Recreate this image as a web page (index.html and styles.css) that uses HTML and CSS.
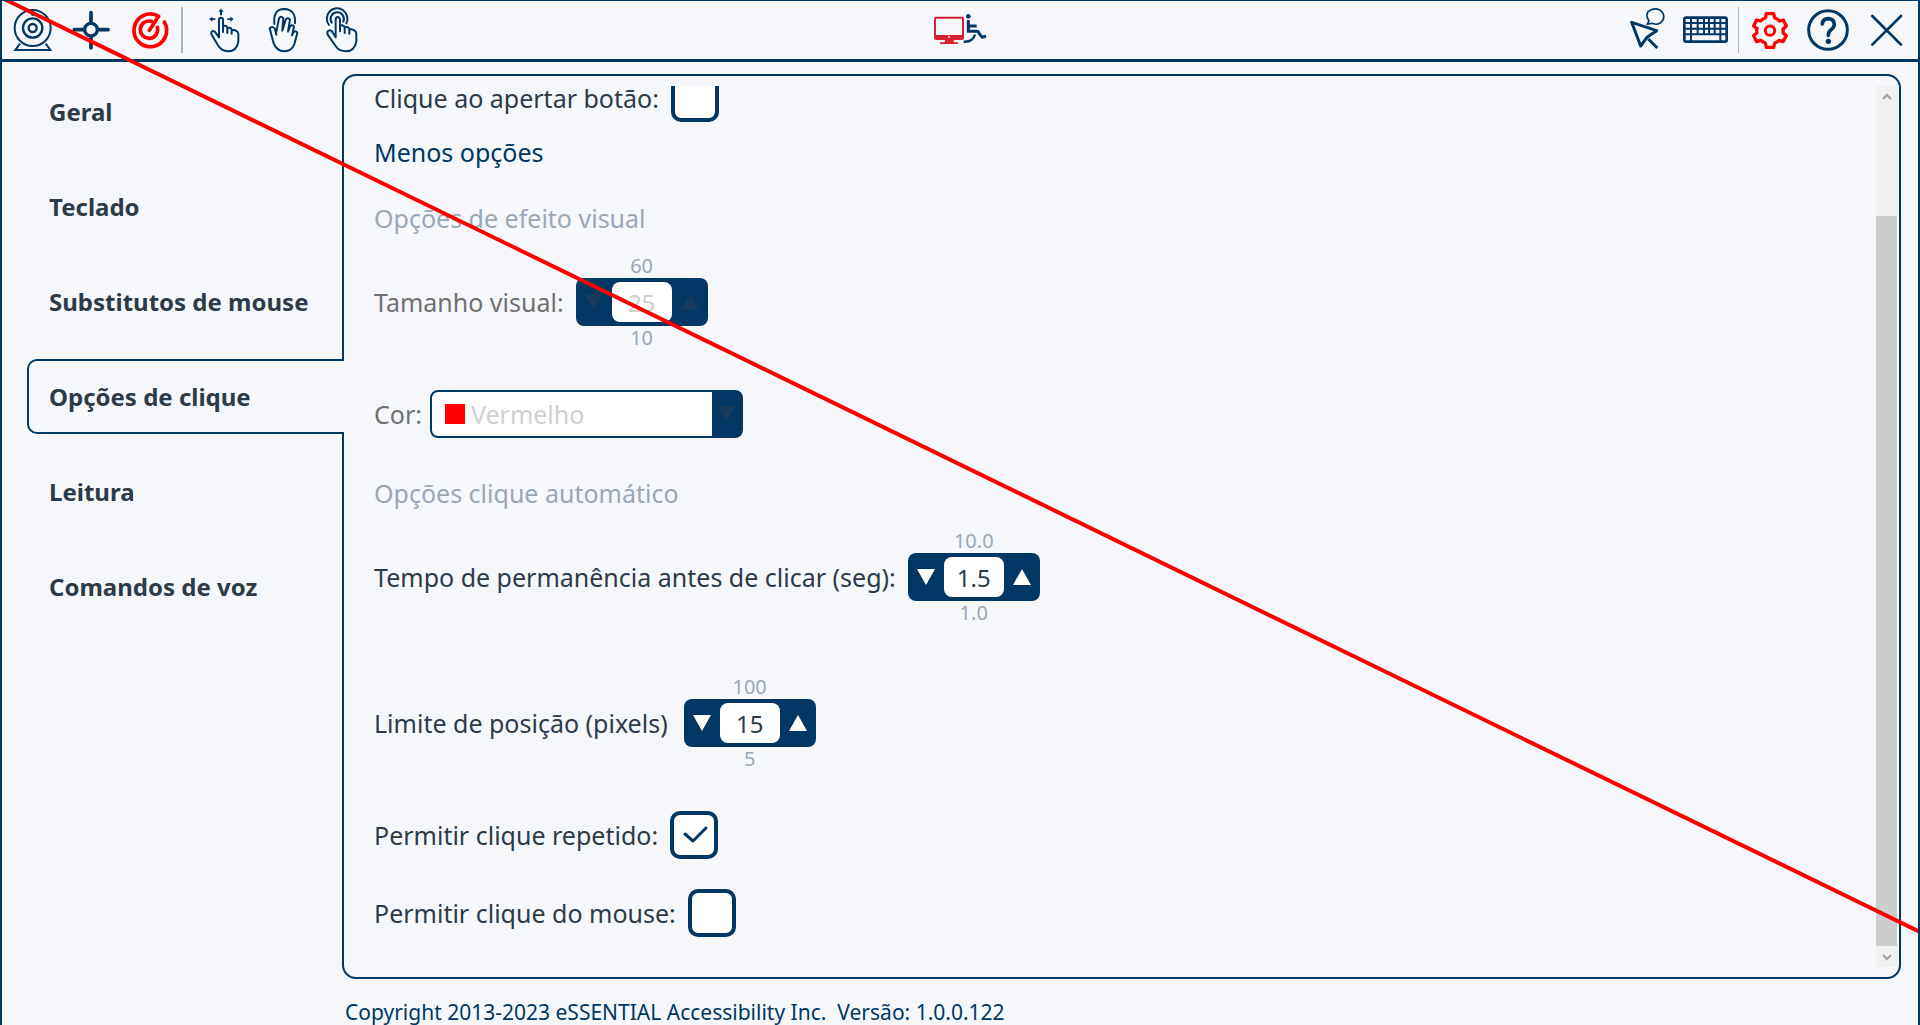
FILE: index.html
```html
<!DOCTYPE html>
<html lang="pt-BR">
<head>
<meta charset="utf-8">
<title>Configurações</title>
<link rel="stylesheet" href="styles.css">
</head>
<body>
<header class="toolbar">
  <div class="tools">
    <button class="tool" type="button" aria-label="Webcam"><svg viewBox="12 3 174 174"><g fill="none" stroke="currentColor" stroke-width="6"><circle cx="98" cy="84" r="54"/><circle cx="98" cy="84" r="29" stroke-width="7"/><circle cx="98" cy="84" r="12" stroke-width="7"/><path d="M60 131 46 150H151L137 131"/></g><circle cx="98" cy="43" r="5" fill="currentColor"/></svg></button>
    <button class="tool" type="button" aria-label="Centralizar"><svg viewBox="186 3 174 174"><g fill="none" stroke="currentColor" stroke-width="11" stroke-linecap="round"><circle cx="273" cy="89" r="19" stroke-width="10"/><path d="M273 38V66M273 113V144M223 89H250M297 89H324"/></g></svg></button>
    <button class="tool red" type="button" aria-label="Clique automático"><svg viewBox="360 3 174 174"><path fill="none" stroke="currentColor" stroke-width="11" stroke-linecap="round" stroke-linejoin="round" d="M493 66A49 49 0 1 1 476 49L448 91M472 82A26 26 0 1 1 454 64"/></svg></button>
    <span class="divider"></span>
    <button class="tool" type="button" aria-label="Arrastar"><svg viewBox="585 3 174 174"><path fill="none" stroke="currentColor" stroke-width="6" stroke-linejoin="round" stroke-linecap="round" d="M657 112V60q0-7 6-7t6 7V96M669 82q0-5 6-5t7 7V99M682 88q0-5 6-5t7 7V101M695 94q1-5 7-4l8 3q5 3 5 10V124Q711 154 684 154 663 153 654 136L635 104q-4-9 4-11 6 0 10 8l8 11"/><path fill="currentColor" d="M663 26l8 9h-5v11h-6V35h-5zM627 57l10-7v5h9v5h-9v5zM701 57l-10-7v5h-9v5h9v5z"/></svg></button>
    <button class="tool" type="button" aria-label="Clique duplo"><svg viewBox="759 3 174 174"><path fill="none" stroke="currentColor" stroke-width="6" stroke-linejoin="round" stroke-linecap="round" d="M823 72Q819 27 853 27 888 28 885 70M829 104 824 85q-8-8-15 0l11 42Q829 153 853 154 876 153 883 132L892 99q-3-8-11-3l-5 10 6-26q-5-8-12-1l-6 16 6-36q-7-9-13 0l-10 33 3-37q-7-9-13 0l-7 36-2 10"/></svg></button>
    <button class="tool" type="button" aria-label="Clique simples"><svg viewBox="933 3 174 174"><path fill="none" stroke="currentColor" stroke-width="6" stroke-linejoin="round" stroke-linecap="round" d="M987 75A31 31 0 1 1 1039 70M995 68A20 20 0 1 1 1030 65M1007 112V59q0-8 6-8t7 8V94M1020 80q1-5 7-4t7 7V99M1034 85q1-5 7-4t7 7V101M1048 91q2-5 8-3l8 4q5 3 5 12V124Q1064 154 1038 154 1016 153 1007 138L983 104q-4-10 5-13 7 0 11 8l8 13"/></svg></button>
  </div>
  <svg class="logo" viewBox="93 3 174 174" role="img" aria-label="eSSENTIAL Accessibility"><rect x="105" y="53" width="84" height="64" rx="3" fill="none" stroke="#d91f32" stroke-width="6"/><path fill="#d91f32" d="M105 105H189V117H105zM136 119h24l2 8h12v5H120v-5h14z"/><circle cx="147" cy="111" r="3" fill="#fff"/><circle cx="205" cy="49" r="7" fill="currentColor"/><path fill="none" stroke="currentColor" stroke-width="9" d="M205 60V94H230Q235 94 238 101L247 112 258 108M205 78H230"/><path fill="none" stroke="currentColor" stroke-width="7" d="M225 104Q218 127 191 125"/></svg>
  <div class="tools end">
    <button class="tool" type="button" aria-label="Cursor"><svg viewBox="54 3 174 174"><path fill="none" stroke="currentColor" stroke-width="9" stroke-linejoin="round" d="M95 67 122 138 141 112 170 92zM145 117 172 144"/><path fill="none" stroke="currentColor" stroke-width="5" d="M147 63Q132 39 152 30 174 21 188 38 197 57 181 69 170 76 157 70L142 72z"/></svg></button>
    <button class="tool" type="button" aria-label="Teclado"><svg viewBox="228 3 174 174"><path fill="none" stroke="currentColor" stroke-width="6" d="M253 69H380M253 86H380M253 103H380M273 55V124M293 55V103M312 55V103M327 55V103M344 55V103M361 55V124"/><rect x="253" y="53" width="127" height="72" rx="5" fill="none" stroke="currentColor" stroke-width="8"/></svg></button>
    <span class="divider thin"></span>
    <button class="tool red" type="button" aria-label="Configurações"><svg viewBox="423 3 174 174"><g fill="none" stroke="currentColor" stroke-width="10" stroke-linejoin="round"><path d="M499 41H521L524 54Q533 57 539 63L550 60 559 78 549 87Q550 93 549 98L559 107 549 125 537 121Q531 127 524 129L521 142H499L496 129Q488 126 482 121L470 125 461 107 471 98Q469 92 471 86L461 78 470 60 482 63Q488 56 496 54z"/><circle cx="510" cy="92" r="14" stroke-width="9"/></g></svg></button>
    <button class="tool" type="button" aria-label="Ajuda"><svg viewBox="597 3 174 174"><circle cx="684" cy="90" r="58" fill="none" stroke="currentColor" stroke-width="9"/><path fill="none" stroke="currentColor" stroke-width="11" stroke-linecap="round" d="M667 72Q668 56 685 56 703 57 703 74 702 83 693 89 685 95 685 106"/><circle cx="685" cy="124" r="8" fill="currentColor"/></svg></button>
    <button class="tool" type="button" aria-label="Fechar"><svg viewBox="771 3 174 174"><path fill="none" stroke="currentColor" stroke-width="8" stroke-linecap="round" d="M817 48 903 134M903 48 817 134"/></svg></button>
  </div>
</header>

<main class="main">
  <nav class="tabs">
    <a class="tab" href="#geral">Geral</a>
    <a class="tab" href="#teclado">Teclado</a>
    <a class="tab" href="#mouse">Substitutos de mouse</a>
    <a class="tab active" href="#clique" aria-current="page">Opções de clique</a>
    <a class="tab" href="#leitura">Leitura</a>
    <a class="tab" href="#voz">Comandos de voz</a>
  </nav>
  <section class="panel">
    <form class="options">
      <div class="row first"><label for="press">Clique ao apertar botão:</label><input class="check" type="checkbox" id="press"></div>
      <a class="less" href="#menos">Menos opções</a>
      <h2 class="heading">Opções de efeito visual</h2>
      <div class="row disabled"><label for="size">Tamanho visual:</label>
        <div class="range"><span class="limit">60</span>
          <div class="spinner"><button class="step" type="button" disabled aria-label="Diminuir"><svg viewBox="0 0 18 16"><path d="M0 0H18L9 16z"/></svg></button><input class="value" id="size" type="text" value="25" disabled><button class="step" type="button" disabled aria-label="Aumentar"><svg viewBox="0 0 18 16"><path d="M0 16H18L9 0z"/></svg></button></div>
          <span class="limit">10</span></div>
      </div>
      <div class="row disabled color"><label for="color">Cor:</label>
        <div class="combo"><span class="swatch"></span><select class="select" id="color" disabled><option>Vermelho</option></select><span class="drop"><svg viewBox="0 0 18 16"><path d="M0 0H18L9 16z"/></svg></span></div>
      </div>
      <h2 class="heading">Opções clique automático</h2>
      <div class="row"><label for="dwell">Tempo de permanência antes de clicar (seg):</label>
        <div class="range"><span class="limit">10.0</span>
          <div class="spinner"><button class="step" type="button" aria-label="Diminuir"><svg viewBox="0 0 18 16"><path d="M0 0H18L9 16z"/></svg></button><input class="value" id="dwell" type="text" value="1.5"><button class="step" type="button" aria-label="Aumentar"><svg viewBox="0 0 18 16"><path d="M0 16H18L9 0z"/></svg></button></div>
          <span class="limit">1.0</span></div>
      </div>
      <div class="row position"><label for="pos">Limite de posição (pixels)</label>
        <div class="range"><span class="limit">100</span>
          <div class="spinner"><button class="step" type="button" aria-label="Diminuir"><svg viewBox="0 0 18 16"><path d="M0 0H18L9 16z"/></svg></button><input class="value" id="pos" type="text" value="15"><button class="step" type="button" aria-label="Aumentar"><svg viewBox="0 0 18 16"><path d="M0 16H18L9 0z"/></svg></button></div>
          <span class="limit">5</span></div>
      </div>
      <div class="row repeat"><label for="repeat">Permitir clique repetido:</label><input class="check" type="checkbox" id="repeat" checked></div>
      <div class="row"><label for="mouse">Permitir clique do mouse:</label><input class="check" type="checkbox" id="mouse"></div>
    </form>
    <div class="scrollbar">
      <button class="arrow" type="button" aria-label="Subir"><svg viewBox="0 0 10 8"><path d="M1 6 5 2 9 6"/></svg></button>
      <div class="track"><div class="thumb"></div></div>
      <button class="arrow" type="button" aria-label="Descer"><svg viewBox="0 0 10 8"><path d="M1 2 5 6 9 2"/></svg></button>
    </div>
  </section>
</main>
<footer class="footer">Copyright 2013-2023 eSSENTIAL Accessibility Inc.&nbsp; Versão: 1.0.0.122</footer>
<svg class="pointer-line" viewBox="0 0 1920 1025" preserveAspectRatio="none" aria-hidden="true"><path d="M0 -3 1920 932"/></svg>
</body>
</html>
```
FILE: styles.css
```css
:root {
  --navy: #003764;
  --page: #f5f7fb;
  --text: #2d3b49;
  --muted: #9aa8b5;
}

* {
  box-sizing: border-box;
}

body {
  margin: 0;
  height: 100vh;
  display: flex;
  flex-direction: column;
  position: relative;
  overflow: hidden;
  border: 2px solid var(--navy);
  border-top-width: 1px;
  border-bottom: 0;
  background: var(--page);
  color: var(--text);
  font: 25px/36px "Noto Sans", sans-serif;
}

button {
  padding: 0;
  border: 0;
  background: none;
  color: inherit;
}

svg {
  display: block;
}

.toolbar {
  display: grid;
  grid-template-columns: 1fr auto 1fr;
  flex: none;
  padding: 0 3px 0 2px;
  border-bottom: 3px solid var(--navy);
  color: var(--navy);
}

.tools {
  display: flex;
  align-items: center;
}

.end {
  justify-content: flex-end;
}

.tool,
.tool svg,
.logo {
  width: 58px;
  height: 58px;
}

.red {
  color: #f00;
}

.divider {
  width: 2px;
  height: 46px;
  margin: 0 12px 0 3px;
  background: #b0b8c2;
}

.thin {
  width: 1px;
  margin: 0 2px 0 4px;
}

.main {
  display: flex;
  flex: 1;
  min-height: 0;
  padding: 12px 17px 0 25px;
}

.tabs {
  display: flex;
  flex-direction: column;
  gap: 20px;
  flex: 0 0 317px;
  margin-right: -2px;
  z-index: 1;
}

.tab {
  display: flex;
  align-items: center;
  height: 75px;
  padding-left: 20px;
  border: 2px solid transparent;
  border-right: 0;
  color: var(--text);
  font-size: 24px;
  font-weight: bold;
  text-decoration: none;
}

.active {
  border-color: var(--navy);
  border-radius: 10px 0 0 10px;
  background: var(--page);
}

.panel {
  display: flex;
  flex: 1;
  min-width: 0;
  padding: 10px 2px 10px 30px;
  border: 2px solid var(--navy);
  border-radius: 14px;
}

/* Scrolled to the end: the first row runs out of view at the top. */
.options {
  display: flex;
  flex-direction: column;
  justify-content: flex-end;
  align-items: flex-start;
  flex: 1;
  overflow: hidden;
  padding-bottom: 30px;
}

.row {
  display: flex;
  flex: none;
  align-items: center;
  gap: 12px;
  line-height: 24px;
}

.first {
  margin-bottom: 12px;
}

.less {
  color: var(--navy);
  text-decoration: none;
}

.heading {
  margin: 30px 0 18px;
  color: var(--muted);
  font-size: 25px;
  font-weight: normal;
}

.color {
  gap: 8px;
  margin: 40px 0 7px;
}

.position {
  gap: 16px;
  margin: 50px 0 40px;
}

.repeat {
  margin-bottom: 30px;
}

.disabled {
  color: #707070;
}

.check {
  appearance: none;
  width: 48px;
  height: 48px;
  margin: 0;
  border: 4px solid var(--navy);
  border-radius: 10px;
  background: #fff;
}

.check:checked {
  background: #fff url("data:image/svg+xml,%3Csvg xmlns='http://www.w3.org/2000/svg' viewBox='0 0 40 40'%3E%3Cpath d='M11 19 19 26 32 13' fill='none' stroke='%23003764' stroke-width='3' stroke-linecap='round' stroke-linejoin='round'/%3E%3C/svg%3E") center / 40px 40px no-repeat;
}

.range {
  display: flex;
  flex-direction: column;
  align-items: center;
}

.limit {
  color: var(--muted);
  font-size: 20px;
}

.spinner {
  display: flex;
  padding: 4px 0;
  border-radius: 8px;
  background: var(--navy);
}

.step {
  display: grid;
  place-items: center;
  width: 36px;
  height: 40px;
}

.step svg,
.drop svg {
  width: 18px;
  height: 16px;
  fill: #fff;
}

.disabled .step svg,
.disabled .drop svg {
  fill: #163a5c;
}

.value {
  width: 60px;
  height: 40px;
  padding: 0;
  border: 0;
  border-radius: 8px;
  background: #fff;
  color: var(--text);
  font: inherit;
  font-size: 24px;
  text-align: center;
}

.disabled .value,
.disabled .select {
  color: #d0d0d0;
  opacity: 1;
}

.combo {
  display: flex;
  align-items: center;
  width: 313px;
  height: 48px;
  padding-left: 13px;
  border: 2px solid var(--navy);
  border-radius: 8px;
  background: #fff;
}

.swatch {
  width: 20px;
  height: 20px;
  margin-right: 6px;
  background: #f00;
}

.select {
  appearance: none;
  flex: 1;
  height: 36px;
  padding: 0;
  border: 0;
  background: none;
  font: inherit;
}

.drop {
  display: grid;
  place-items: center;
  align-self: stretch;
  width: 29px;
  background: var(--navy);
}

.scrollbar {
  display: flex;
  flex-direction: column;
  width: 21px;
  background: #f0f0f0;
}

.arrow {
  display: grid;
  place-items: center;
  height: 21px;
}

.arrow svg {
  width: 10px;
  height: 8px;
  fill: none;
  stroke: #a0a0a0;
  stroke-width: 2;
}

.track {
  display: flex;
  flex-direction: column;
  justify-content: flex-end;
  flex: 1;
}

.thumb {
  height: 87%;
  background: #cdcdcd;
}

.footer {
  flex: none;
  padding: 20px 0 0 343px;
  color: var(--navy);
  font-size: 21px;
  line-height: 26px;
}

.pointer-line {
  position: absolute;
  top: -1px;
  left: -2px;
  width: 100vw;
  height: 100vh;
  z-index: 2;
  pointer-events: none;
}

.pointer-line path {
  fill: none;
  stroke: #f00;
  stroke-width: 4;
}
```
